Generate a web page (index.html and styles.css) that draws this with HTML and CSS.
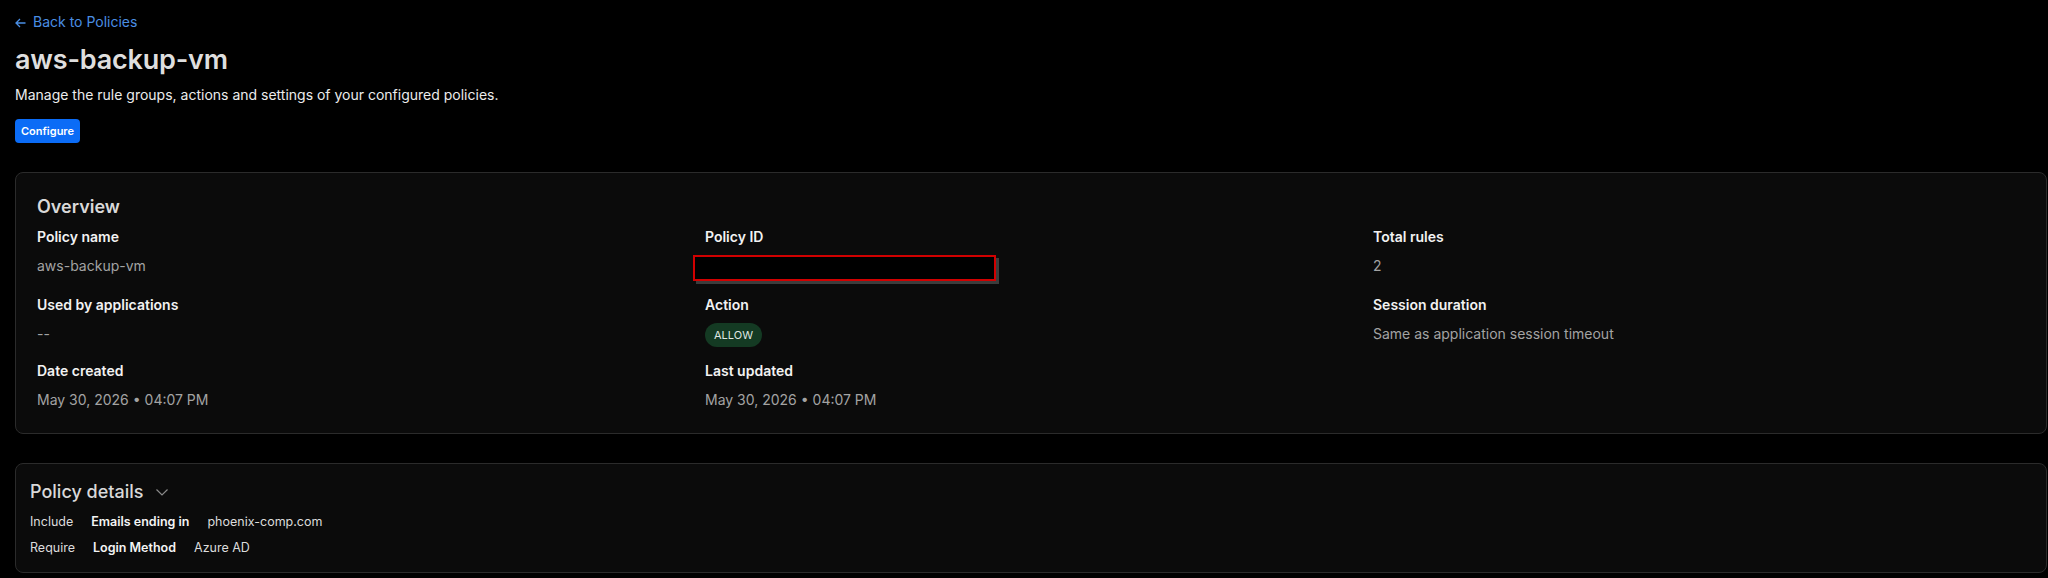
FILE: index.html
```html
<!DOCTYPE html>
<html lang="en">
<head>
    <meta charset="UTF-8">
    <meta name="viewport" content="width=device-width, initial-scale=1.0">
    <title>aws-backup-vm - Policies</title>
    <link rel="stylesheet" href="styles.css">
</head>
<body>
    <div class="page">
        <a class="back-link" href="#">
            <svg class="back-arrow" width="11" height="10" viewBox="0 0 11 10"><path d="M10.5 5H1M5 1L1 5l4 4" fill="none" stroke="currentColor" stroke-width="1.3"/></svg>
            Back to Policies
        </a>
        <h1 class="page-title">aws-backup-vm</h1>
        <p class="page-desc">Manage the rule groups, actions and settings of your configured policies.</p>
        <button class="btn-primary">Configure</button>

        <div class="card overview">
            <h2 class="card-title">Overview</h2>
            <div class="fields">
                <div class="field">
                    <div class="field-label">Policy name</div>
                    <div class="field-value">aws-backup-vm</div>
                </div>
                <div class="field">
                    <div class="field-label">Policy ID</div>
                    <div class="field-value"><span class="redacted"></span></div>
                </div>
                <div class="field">
                    <div class="field-label">Total rules</div>
                    <div class="field-value">2</div>
                </div>
                <div class="field">
                    <div class="field-label">Used by applications</div>
                    <div class="field-value">--</div>
                </div>
                <div class="field">
                    <div class="field-label">Action</div>
                    <div class="field-value"><span class="badge-allow">ALLOW</span></div>
                </div>
                <div class="field">
                    <div class="field-label">Session duration</div>
                    <div class="field-value">Same as application session timeout</div>
                </div>
                <div class="field">
                    <div class="field-label">Date created</div>
                    <div class="field-value">May 30, 2026 &bull; 04:07 PM</div>
                </div>
                <div class="field">
                    <div class="field-label">Last updated</div>
                    <div class="field-value">May 30, 2026 &bull; 04:07 PM</div>
                </div>
            </div>
        </div>

        <div class="card details">
            <h2 class="card-title details-title">
                Policy details
                <svg class="chevron" width="14" height="14" viewBox="0 0 14 14"><path d="M1.5 4.5L7 10l5.5-5.5" fill="none" stroke="currentColor" stroke-width="1.2"/></svg>
            </h2>
            <div class="rule-row">
                <span class="rule-kind">Include</span>
                <span class="rule-type">Emails ending in</span>
                <span class="rule-value">phoenix-comp.com</span>
            </div>
            <div class="rule-row">
                <span class="rule-kind">Require</span>
                <span class="rule-type">Login Method</span>
                <span class="rule-value">Azure AD</span>
            </div>
        </div>
    </div>
</body>
</html>
```

FILE: styles.css
```css
body { margin: 0; background: #000; color: #e6e6e6; font-family: Inter, "Noto Sans", sans-serif; }
.page { padding: 12px 1px 0 15px; }

.back-link { display: flex; align-items: center; gap: 7px; font-size: 14px; line-height: 20px; color: #4a8ee4; text-decoration: none; }
.back-arrow { margin-top: 1px; }

.page-title { margin: 10px 0 0; font-size: 27px; line-height: 36px; font-weight: 600; color: #dedede; letter-spacing: -0.2px; }
.page-desc { margin: 7px 0 0; font-size: 14px; line-height: 20px; color: #ececec; }

.btn-primary { margin-top: 14px; height: 24px; padding: 0 6px; border: none; border-radius: 4px; background: #0b6cf6; color: #fff; font-family: inherit; font-size: 11px; font-weight: 600; cursor: pointer; }

.card { background: #0b0b0b; border: 1px solid #2b2b2b; border-radius: 8px; }
.card-title { margin: 0; font-size: 18px; line-height: 26px; font-weight: 600; color: #d9d9d9; }

.overview { margin-top: 29px; padding: 21px 21px 22px; }
.fields { display: grid; grid-template-columns: repeat(3, 1fr); column-gap: 16px; row-gap: 14px; margin-top: 7px; }
.field-label { font-size: 14px; line-height: 20px; font-weight: 600; color: #f2f2f2; margin-bottom: 8px; }
.field-value { font-size: 14px; line-height: 22px; color: #a3a3a3; }

.redacted { display: block; width: 299px; height: 22px; margin-left: -12px; margin-top: 0; background: #000; border: 2px solid #d10000; box-shadow: 3px 3px 0 #3c3c3c; }

.badge-allow { display: inline-block; height: 24px; padding: 0 9px; border-radius: 12px; background: #143a23; color: #dfe7e1; font-size: 11px; line-height: 24px; }

.details { margin-top: 29px; padding: 15px 14px 14px; }
.details-title { display: flex; align-items: center; gap: 12px; font-weight: 500; }
.chevron { color: #8a8a8a; }
.rule-row { display: flex; gap: 18px; font-size: 12.5px; line-height: 20px; color: #dcdcdc; margin-top: 7px; }
.rule-row + .rule-row { margin-top: 6px; }
.rule-type { font-weight: 600; color: #f4f4f4; }
```
